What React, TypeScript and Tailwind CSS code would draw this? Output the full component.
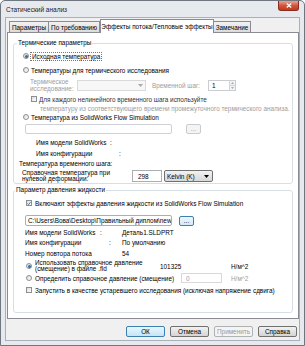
import React from "react";

function Radio({ checked = false }: { checked?: boolean }) {
  return (
    <span className="flex h-[6px] w-[6px] shrink-0 items-center justify-center rounded-full border border-[#8e8f8f] bg-gradient-to-br from-[#dcdcdc] to-[#ffffff]">
      {checked && <span className="h-[3px] w-[3px] rounded-full bg-[#2a6cb0]" />}
    </span>
  );
}

function Check({ checked = false }: { checked?: boolean }) {
  return (
    <span className="flex h-[6px] w-[6px] shrink-0 items-center justify-center border border-[#8e8f8f] bg-gradient-to-br from-[#dcdcdc] to-[#ffffff]">
      {checked && (
        <svg width="5" height="5" viewBox="0 0 5 5">
          <path d="M0.6 2.6 L2 4 L4.5 0.8" fill="none" stroke="#1d4f8f" strokeWidth="1" />
        </svg>
      )}
    </span>
  );
}

function Btn({ label, kind = "normal" }: { label: string; kind?: "normal" | "default" | "disabled" }) {
  const cls =
    kind === "default"
      ? "border-[#3c7fb1] bg-gradient-to-b from-[#eaf6fd] to-[#c4e5f6] text-black"
      : kind === "disabled"
      ? "border-[#adb2b5] bg-[#f4f4f4] text-[#9a9a9a]"
      : "border-[#707070] bg-gradient-to-b from-[#f2f2f2] to-[#d4d4d4] text-black";
  return (
    <div className={`flex h-[11px] w-[39px] items-center justify-center rounded-[2px] border ${cls}`}>
      {label}
    </div>
  );
}

function Dots({ disabled = false }: { disabled?: boolean }) {
  return (
    <div
      className={`flex h-[10px] w-[15px] items-center justify-center rounded-[2px] border leading-[6px] ${
        disabled ? "border-[#c9cccf] bg-[#f4f4f4] text-[#9a9a9a]" : "border-[#3c7fb1] bg-gradient-to-b from-[#eaf6fd] to-[#d3ebf8] text-black"
      }`}
    >
      ...
    </div>
  );
}

function Tab({ label, w, active = false }: { label: string; w: string; active?: boolean }) {
  if (active) {
    return (
      <div className={`relative z-10 -mb-px flex h-[14px] ${w} items-center justify-center border border-b-0 border-[#898c95] bg-white`}>
        {label}
      </div>
    );
  }
  return (
    <div className={`flex h-[11px] ${w} items-center justify-center border border-b-0 border-r-0 border-[#898c95] bg-gradient-to-b from-[#f2f2f2] to-[#dbdbdb] last:border-r`}>
      {label}
    </div>
  );
}

export default function App() {
  return (
    <div className="h-[346px] w-[305px] bg-white font-['Liberation_Sans',Arial,sans-serif] text-[6.4px] leading-[7px] text-black">
      <div className="flex h-[346px] w-[305px] flex-col rounded-t-[5px] border border-[#6f7680] bg-[#e6e9ed]">
        {/* title bar */}
        <div className="flex h-[16px] shrink-0 items-start justify-between">
          <div className="pl-[5px] pt-[5px] text-[6.5px] text-[#222]">Статический анализ</div>
          <div className="mr-[5px] flex h-[10px] w-[21px] items-center justify-center rounded-b-[3px] border border-t-0 border-[#8a2c1e] bg-gradient-to-b from-[#e8a493] via-[#d0563c] to-[#c23a1f]">
            <svg width="6" height="5" viewBox="0 0 6 5">
              <path d="M0.8 0.5 L5.2 4.5 M5.2 0.5 L0.8 4.5" stroke="white" strokeWidth="1.3" />
            </svg>
          </div>
        </div>

        {/* client */}
        <div className="mx-[4px] flex flex-1 flex-col border border-[#a9b0b9] bg-[#f0f0f0] pt-[1px]">
          <div className="ml-px w-[292px]">
            <div className="flex items-end pl-[2px]">
              <div className="flex items-end">
                <Tab label="Параметры" w="w-[39px]" />
                <Tab label="По требованию" w="w-[52px]" />
              </div>
              <Tab label="Эффекты потока/Тепловые эффекты" w="w-[114px]" active />
              <div className="flex items-end">
                <div className="flex h-[11px] w-[37px] items-center justify-center border border-b-0 border-l-0 border-[#898c95] bg-gradient-to-b from-[#f2f2f2] to-[#dbdbdb]">
                  Замечание
                </div>
              </div>
            </div>

            <div className="flex h-[287px] flex-col border border-[#898c95] bg-white px-[5px]">
              {/* group 1 */}
              <fieldset className="mt-[6px] rounded-[3px] border border-[#d5dfe5] pb-px">
                <legend className="ml-[3px] h-[8px] px-px leading-[8px]">Термические параметры</legend>
                <div className="flex flex-col pt-[2px]">
                  <div className="flex h-[14px] items-center">
                    <div className="ml-[9px]"><Radio checked /></div>
                    <span className="ml-[1px] h-[9px] border border-dotted border-[#777] px-px leading-[7px]">Исходная температура</span>
                  </div>
                  <div className="flex h-[14px] items-center">
                    <div className="ml-[9px]"><Radio /></div>
                    <span className="ml-[2px]">Температуры для термического исследования</span>
                  </div>
                  <div className="mt-[3px] flex h-[11px] items-center text-[#9d9d9d]">
                    <div className="ml-[16px] w-[47px] leading-[6.5px]">Термическое<br />исследование:</div>
                    <div className="flex h-[11px] w-[69px] items-center justify-end border border-[#d9d9d9] bg-[#f7f7f7] pr-[2px]">
                      <svg width="5" height="3" viewBox="0 0 5 3"><path d="M0 0 H5 L2.5 3 Z" fill="#a9a9a9" /></svg>
                    </div>
                    <div className="ml-[6px] w-[56px]">Временной шаг:</div>
                    <div className="flex h-[11px] w-[28px] border border-[#c9ccd1] bg-white">
                      <div className="flex flex-1 items-center pl-[3px] text-black">1</div>
                      <div className="flex w-[6px] flex-col border-l border-[#d4d4d4]">
                        <div className="flex flex-1 items-center justify-center border-b border-[#d4d4d4] bg-[#f4f4f4]">
                          <svg width="3" height="2" viewBox="0 0 3 2"><path d="M0 2 H3 L1.5 0 Z" fill="#aaa" /></svg>
                        </div>
                        <div className="flex flex-1 items-center justify-center bg-[#f4f4f4]">
                          <svg width="3" height="2" viewBox="0 0 3 2"><path d="M0 0 H3 L1.5 2 Z" fill="#aaa" /></svg>
                        </div>
                      </div>
                    </div>
                  </div>
                  <div className="mt-[2px] flex h-[12px] items-center">
                    <div className="ml-[17px]"><Check /></div>
                    <span className="ml-[2px] text-[#333]">Для каждого нелинейного временного шага используйте</span>
                  </div>
                  <div className="ml-[26px] h-[7px] whitespace-nowrap text-[#9d9d9d]">
                    температуру из соответствующего времени промежуточного термического анализа.
                  </div>
                  <div className="flex h-[10px] items-center">
                    <div className="ml-[9px]"><Radio /></div>
                    <span className="ml-[2px]">Температура из SolidWorks Flow Simulation</span>
                  </div>
                  <div className="mt-[2px] flex h-[10px] items-center">
                    <div className="ml-[11px] h-[10px] w-[147px] rounded-[2px] border border-[#cdd0d5] bg-white" />
                    <div className="ml-[14px]"><Dots disabled /></div>
                  </div>
                  <div className="flex h-[16px] items-center">
                    <div className="ml-[22px] w-[74px]">Имя модели SolidWorks</div>
                    <span>:</span>
                  </div>
                  <div className="flex h-[6px] items-center">
                    <div className="ml-[22px] w-[83px]">Имя конфигурации</div>
                    <span>:</span>
                  </div>
                  <div className="flex h-[14px] items-center">
                    <div className="ml-[5px]">Температура временного шага:</div>
                  </div>
                  <div className="flex h-[12px] items-center">
                    <div className="ml-[8px] w-[110px] leading-[6.5px]">Справочная температура при<br />нулевой деформации:</div>
                    <div className="flex h-[12px] w-[30px] items-center border border-[#abadb3] bg-white pl-[5px]">298</div>
                    <div className="ml-[2px] flex h-[12px] w-[49px] items-center justify-between rounded-[2px] border border-[#707070] bg-gradient-to-b from-[#f2f2f2] to-[#d8d8d8] pl-[2px] pr-[3px]">
                      <span>Kelvin (K)</span>
                      <svg width="5" height="3" viewBox="0 0 5 3"><path d="M0 0 H5 L2.5 3 Z" fill="#000" /></svg>
                    </div>
                  </div>
                </div>
              </fieldset>

              {/* group 2 */}
              <fieldset className="mt-[2px] rounded-[3px] border border-[#d5dfe5] pb-[15px]">
                <legend className="ml-[1px] h-[8px] px-px leading-[8px]">Параметр давления жидкости</legend>
                <div className="flex flex-col pt-[3px]">
                  <div className="flex h-[12px] items-center">
                    <div className="ml-[12px]"><Check checked /></div>
                    <span className="ml-[3px]">Включают эффекты давления жидкости из SolidWorks Flow Simulation</span>
                  </div>
                  <div className="mt-[6px] flex h-[11px] items-center">
                    <div className="ml-[11px] flex h-[11px] w-[147px] items-center overflow-hidden whitespace-nowrap rounded-[2px] border border-[#abadb3] bg-white pl-[2px]">
                      C:\Users\Вова\Desktop\Правильный диплом\new
                    </div>
                    <div className="ml-[7px]"><Dots /></div>
                  </div>
                  <div className="flex h-[12px] items-center">
                    <div className="ml-[11px] w-[75px]">Имя модели SolidWorks</div>
                    <span className="w-[22px]">:</span>
                    <span>Деталь1.SLDPRT</span>
                  </div>
                  <div className="flex h-[9px] items-center">
                    <div className="ml-[11px] w-[84px]">Имя конфигурации</div>
                    <span className="w-[13px]">:</span>
                    <span>По умолчанию</span>
                  </div>
                  <div className="flex h-[12px] items-center">
                    <div className="ml-[11px] w-[97px]">Номер повтора потока</div>
                    <span>54</span>
                  </div>
                  <div className="flex h-[14px] items-center">
                    <div className="ml-[12px]"><Radio checked /></div>
                    <div className="ml-[3px] w-[125px] leading-[6.5px]">Использовать справочное давление<br />(смещение) в файле .fld</div>
                    <span className="w-[71px]">101325</span>
                    <span>Н/м^2</span>
                  </div>
                  <div className="flex h-[10px] items-center">
                    <div className="ml-[12px]"><Radio /></div>
                    <div className="ml-[3px] w-[146px]">Определить справочное давление (смещение)</div>
                    <div className="flex h-[10px] w-[41px] items-center border border-[#d9d9d9] bg-white pl-[4px] text-[#9d9d9d]">0</div>
                    <span className="ml-[9px] text-[#9d9d9d]">Н/м^2</span>
                  </div>
                  <div className="flex h-[14px] items-center">
                    <div className="ml-[12px]"><Check /></div>
                    <span className="ml-[3px] whitespace-nowrap">Запустить в качестве устаревшего исследования (исключая напряжение сдвига)</span>
                  </div>
                </div>
              </fieldset>
            </div>
          </div>

          {/* buttons */}
          <div className="mt-[7px] flex justify-end gap-[5px] pr-[2px]">
            <Btn label="ОК" kind="default" />
            <Btn label="Отмена" />
            <Btn label="Применить" kind="disabled" />
            <Btn label="Справка" />
          </div>
        </div>
        <div className="h-[4px] shrink-0" />
      </div>
    </div>
  );
}
